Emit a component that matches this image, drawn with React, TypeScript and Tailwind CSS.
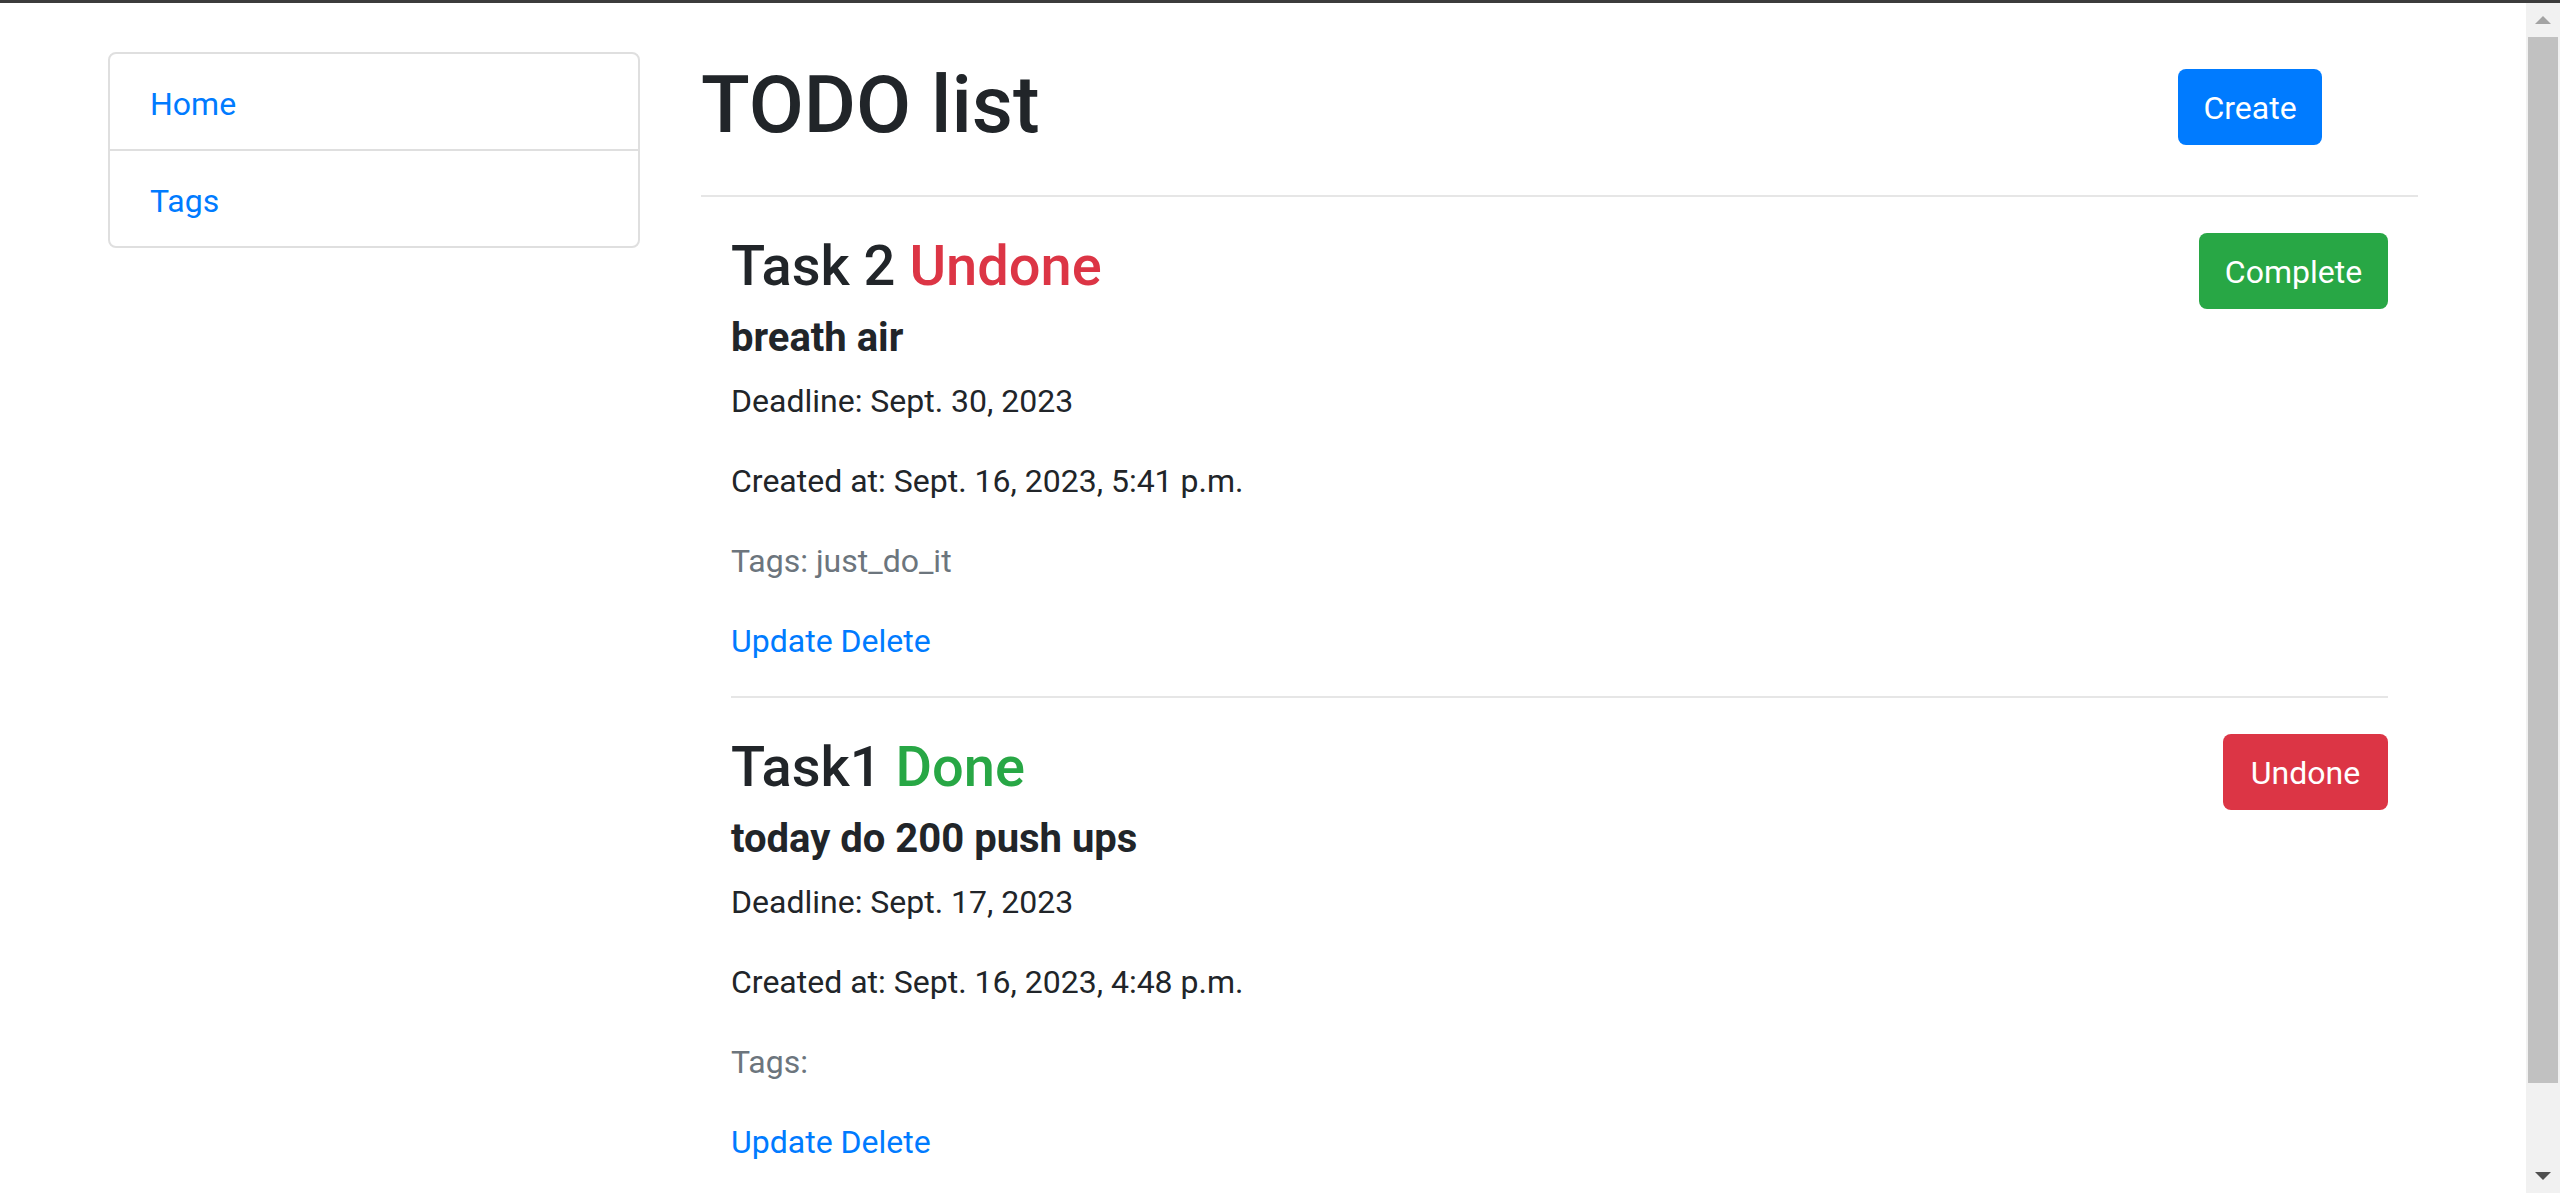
import React from "react"

type Task = {
  id: number
  title: string
  done: boolean
  description: string
  deadline: string
  createdAt: string
  tags: string[]
}

const tasks: Task[] = [
  {
    id: 2,
    title: "Task 2",
    done: false,
    description: "breath air",
    deadline: "Sept. 30, 2023",
    createdAt: "Sept. 16, 2023, 5:41 p.m.",
    tags: ["just_do_it"],
  },
  {
    id: 1,
    title: "Task1",
    done: true,
    description: "today do 200 push ups",
    deadline: "Sept. 17, 2023",
    createdAt: "Sept. 16, 2023, 4:48 p.m.",
    tags: [],
  },
]

function TaskItem({ task }: { task: Task }) {
  return (
    <div className="mx-[30px] pt-[36px] border-b-2 border-[#e6e6e6]">
      {task.done ? (
        <button className="float-right w-[165px] h-[76px] rounded-[8px] bg-[#dc3545] text-white text-[32px] leading-[48px] flex items-center justify-center pt-[2px]">
          Undone
        </button>
      ) : (
        <button className="float-right w-[189px] h-[76px] rounded-[8px] bg-[#28a745] text-white text-[32px] leading-[48px] flex items-center justify-center pt-[2px]">
          Complete
        </button>
      )}
      <h3 className="text-[56px] leading-[1.2] font-medium text-[#212529] mb-[14px]">
        {task.title}{" "}
        {task.done ? (
          <span className="text-[#28a745]">Done</span>
        ) : (
          <span className="text-[#dc3545]">Undone</span>
        )}
      </h3>
      <h5 className="text-[40px] leading-[48px] font-bold text-[#212529] mb-[15px]">{task.description}</h5>
      <p className="text-[32px] leading-[48px] text-[#212529] mb-[32px]">Deadline: {task.deadline}</p>
      <p className="text-[32px] leading-[48px] text-[#212529] mb-[32px]">Created at: {task.createdAt}</p>
      <p className="text-[32px] leading-[48px] text-[#6c757d] mb-[32px]">Tags: {task.tags.join(" ")}</p>
      <p className="text-[32px] leading-[48px] text-[#007bff] mb-[31px]">
        <a href="#">Update</a> <a href="#">Delete</a>
      </p>
    </div>
  )
}

function Scrollbar() {
  return (
    <div className="w-[34px] shrink-0 bg-[#f1f1f1] flex flex-col">
      <div className="h-[34px] flex items-center justify-center">
        <svg width="16" height="8" viewBox="0 0 16 8">
          <polygon points="0,8 8,0 16,8" fill="#a3a3a3" />
        </svg>
      </div>
      <div className="mx-[2px] h-[1046px] bg-[#c1c1c1]" />
      <div className="flex-1" />
      <div className="h-[34px] flex items-center justify-center">
        <svg width="16" height="8" viewBox="0 0 16 8">
          <polygon points="0,0 16,0 8,8" fill="#505050" />
        </svg>
      </div>
    </div>
  )
}

export default function App() {
  return (
    <div className="h-[1193px] overflow-hidden flex flex-col bg-white font-['Roboto','Liberation_Sans',sans-serif]">
      <div className="h-[3px] shrink-0 bg-[#3c3c3c]" />
      <div className="flex-1 flex min-h-0">
        <div className="flex-1 overflow-hidden flex items-start pt-[49px] pl-[108px] pr-[108px] gap-[61px]">
          {/* Sidebar */}
          <div className="w-[532px] shrink-0 border-2 border-[#dfdfdf] rounded-[8px]">
            <a href="#" className="block px-[40px] pt-[26px] pb-[21px] text-[32px] leading-[48px] text-[#007bff] border-b-2 border-[#dfdfdf]">
              Home
            </a>
            <a href="#" className="block px-[40px] pt-[26px] pb-[21px] text-[32px] leading-[48px] text-[#007bff]">
              Tags
            </a>
          </div>

          {/* Main */}
          <div className="flex-1 min-w-0">
            <div className="flex items-start justify-between">
              <h1 className="mt-[5px] text-[80px] leading-[96px] font-medium text-[#212529]">TODO list</h1>
              <button className="mt-[17px] mr-[96px] w-[144px] h-[76px] rounded-[8px] bg-[#007bff] text-white text-[32px] leading-[48px] flex items-center justify-center pt-[2px]">
                Create
              </button>
            </div>
            <div className="mt-[42px] h-[2px] bg-[#e6e6e6]" />
            {tasks.map((task) => (
              <TaskItem key={task.id} task={task} />
            ))}
          </div>
        </div>
        <Scrollbar />
      </div>
    </div>
  )
}
